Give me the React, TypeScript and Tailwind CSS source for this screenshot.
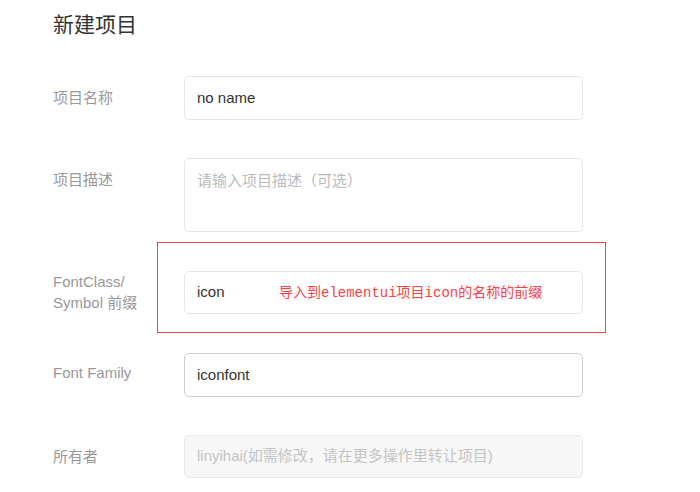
import React from "react";

const font = { fontFamily: '"Liberation Sans", "Noto Sans CJK SC", sans-serif' };

export default function App() {
  return (
    <div
      className="w-[700px] h-[492px] bg-white overflow-hidden pl-[53px] pt-[13px]"
      style={font}
    >
      <div className="text-[21px] leading-[24px] text-[#333]">新建项目</div>

      <div className="flex mt-[39px]">
        <div className="w-[131px] pt-[11px] text-[15px] leading-[22px] text-[#999]">项目名称</div>
        <div className="w-[399px] h-[44px] border border-[#e6e6e6] rounded-[5px] flex items-center pl-[12px] text-[15px] text-[#333]">
          no name
        </div>
      </div>

      <div className="flex mt-[38px]">
        <div className="w-[131px] pt-[11px] text-[15px] leading-[22px] text-[#999]">项目描述</div>
        <div className="w-[399px] h-[74px] border border-[#e6e6e6] rounded-[5px] pl-[12px] pt-[11px] text-[15px] leading-[22px] text-[#bbb]">
          请输入项目描述（可选）
        </div>
      </div>

      <div className="relative flex mt-[39px]">
        <div className="w-[131px] text-[15px] leading-[21px] text-[#999]">
          FontClass/
          <br />
          Symbol 前缀
        </div>
        <div className="relative w-[399px] h-[43px] border border-[#e6e6e6] rounded-[5px] flex items-center pl-[12px] text-[15px] text-[#333]">
          icon
          <span
            className="absolute left-[94px] top-[10px] text-[14px] leading-[22px] text-[#ff4040]"
            style={{ fontFamily: '"Liberation Mono", "Noto Sans CJK SC", monospace' }}
          >
            导入到elementui项目icon的名称的前缀
          </span>
        </div>
        <div className="pointer-events-none absolute left-[104px] top-[-29px] w-[449px] h-[91px] border border-[#ff4040]" />
      </div>

      <div className="flex mt-[39px]">
        <div className="w-[131px] pt-[9px] text-[15px] leading-[22px] text-[#999]">Font Family</div>
        <div className="w-[399px] h-[44px] border border-[#d0d0d0] rounded-[5px] flex items-center pl-[12px] text-[15px] text-[#333]">
          iconfont
        </div>
      </div>

      <div className="flex mt-[38px]">
        <div className="w-[131px] pt-[11px] text-[15px] leading-[22px] text-[#999]">所有者</div>
        <div className="w-[399px] h-[43px] border border-[#eaeaea] bg-[#f7f7f7] rounded-[5px] flex items-center pl-[12px] text-[15px] text-[#c4c4c4]">
          linyihai(如需修改，请在更多操作里转让项目)
        </div>
      </div>
    </div>
  );
}
